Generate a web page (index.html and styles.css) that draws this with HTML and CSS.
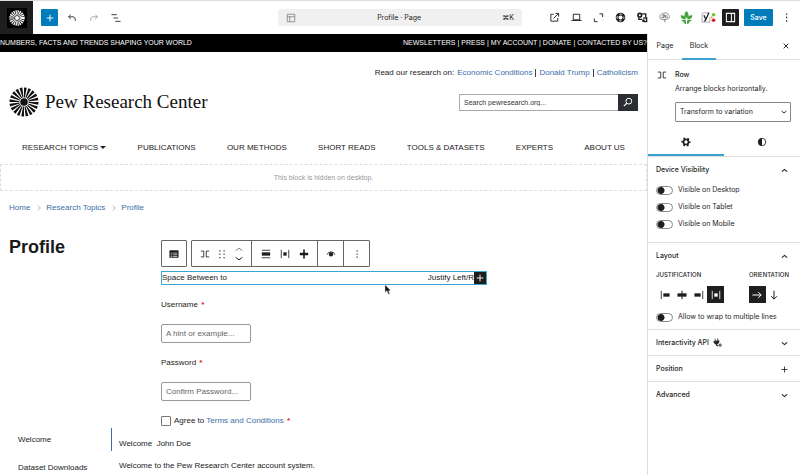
FILE: index.html
```html
<!DOCTYPE html>
<html lang="en">
<head>
<meta charset="utf-8">
<title>Profile · Page</title>
<link rel="stylesheet" href="styles.css">
</head>
<body>
<svg class="defs" aria-hidden="true">
  <symbol id="sun" viewBox="0 0 30 30"><circle cx="15" cy="15" r="9.500" fill="none" stroke="currentColor" stroke-width="10" pathLength="40" stroke-dasharray="1.25 .75"/><circle cx="15" cy="15" r="3.800" fill="currentColor"/></symbol>
  <symbol id="row" viewBox="0 0 24 24"><path d="M2 5h7v14H2M22 5h-7v14h7" fill="none" stroke="currentColor" stroke-width="2"/></symbol>
  <symbol id="plus" viewBox="0 0 24 24"><path d="M12 4v16M4 12h16" fill="none" stroke="currentColor" stroke-width="2.200"/></symbol>
  <symbol id="down" viewBox="0 0 24 24"><path d="M5 9l7 6 7-6" fill="none" stroke="currentColor" stroke-width="2.800"/></symbol>
  <symbol id="up" viewBox="0 0 24 24"><path d="M5 15l7-6 7 6" fill="none" stroke="currentColor" stroke-width="2.800"/></symbol>
  <symbol id="dots" viewBox="0 0 24 24"><path d="M11 3h2.500v3H11zM11 10.500h2.500v3H11zM11 18h2.500v3H11z" fill="currentColor"/></symbol>
  <symbol id="between" viewBox="0 0 24 24"><path d="M3 2v20M21 2v20" stroke="currentColor" stroke-width="2"/><path d="M8 8h8v8H8z" fill="currentColor"/></symbol>
</svg>

<header class="topbar">
  <a class="site-hub" href="#" aria-label="View pages"><svg><use href="#sun"/></svg></a>
  <div class="tools">
    <button class="inserter" aria-label="Add block"><svg><use href="#plus"/></svg></button>
    <button aria-label="Undo"><svg viewBox="0 0 24 24"><path d="M9 4L3.500 9 9 14M4 9h11q5 0 5 8v2" fill="none" stroke="#333" stroke-width="2.200"/></svg></button>
    <button aria-label="Redo"><svg viewBox="0 0 24 24"><path d="M15 4l5.500 5-5.500 5M20 9H9q-5 0-5 8v2" fill="none" stroke="#999" stroke-width="2"/></svg></button>
    <button aria-label="Document overview"><svg viewBox="0 0 24 24"><path d="M1 4h13M6 12h11M10 20h13" stroke="#333" stroke-width="2.200"/></svg></button>
  </div>
  <button class="command">
    <svg viewBox="0 0 24 24"><path d="M3 3h18v18H3zM3 9h18M9 9v12" fill="none" stroke="#777" stroke-width="1.800"/></svg>
    <span>Profile · Page</span>
    <kbd>⌘K</kbd>
  </button>
  <div class="actions">
    <button aria-label="View page"><svg viewBox="0 0 24 24"><path d="M10 5H4v15h15v-7M14 3h7v7M21 3L10 14" fill="none" stroke="currentColor" stroke-width="2"/></svg></button>
    <button aria-label="Preview"><svg viewBox="0 0 24 24"><path d="M5 5h14v12H5zM1 18.500h22" fill="none" stroke="currentColor" stroke-width="2"/></svg></button>
    <button aria-label="Zoom out"><svg viewBox="0 0 24 24"><path d="M14 4h7v7M10 21H3v-7" fill="none" stroke="currentColor" stroke-width="2"/></svg></button>
    <button aria-label="Help"><svg viewBox="0 0 24 24"><circle cx="12" cy="12" r="7.500" fill="none" stroke="currentColor" stroke-width="6"/><circle cx="12" cy="12" r="7.500" fill="none" stroke="#fff" stroke-width="2" pathLength="16" stroke-dasharray="2 2" stroke-dashoffset="1"/></svg></button>
    <button aria-label="Block settings"><svg viewBox="0 0 24 24"><circle cx="6" cy="7" r="4" fill="none" stroke="currentColor" stroke-width="3.500"/><path d="M11 4h8v7M4 12v4h7M14 13h7v8h-6" fill="none" stroke="currentColor" stroke-width="3"/><circle cx="14" cy="19" r="3" fill="currentColor"/></svg></button>
    <button aria-label="Assistant"><svg viewBox="0 0 24 24"><path d="M14 23l-3-8M4 15C-1 11 3 4 8 4c4-4 12-2 13 3 4 4 0 9-5 9-4 1-8 2-12-1zM6 9q6-5 12 0M5 13q7-6 15-1M9 5q5 1 5 9M9 14q0-4 3-5" fill="none" stroke="#777" stroke-width="1.800"/></svg></button>
    <button class="wide" aria-label="Artichoke"><svg viewBox="0 0 24 24"><path d="M12 0q5 4 4 9-1 3-4 4-3-1-4-4-1-5 4-9zM1 8q8-1 10 7-9 2-10-7zM23 8q-8-1-10 7 9 2 10-7zM2 17q7-2 9 1v6H9q-1-4-7-7zM22 17q-7-2-9 1v6h2q1-4 7-7z" fill="#46a33c"/></svg></button>
    <button class="yoast" aria-label="Yoast"><svg viewBox="0 0 32 24"><path d="M15 2H5q-3 0-3 3v17h17V12" fill="none" stroke="#888" stroke-width="1.500"/><path d="M6 7l4 9M17 1l-7 16q-1 3-4 3" fill="none" stroke="#222" stroke-width="2.800"/><circle cx="27" cy="6" r="4" fill="#6cc832"/><circle cx="23" cy="12" r="2" fill="#ee9b36"/><circle cx="27" cy="18" r="4" fill="#dc2020"/></svg></button>
    <button class="settings" aria-label="Settings"><svg viewBox="0 0 24 24"><path d="M3 3h18v18H3zM14 3v18" fill="none" stroke="currentColor" stroke-width="2.200"/></svg></button>
    <button class="save">Save</button>
    <button aria-label="Options"><svg><use href="#dots"/></svg></button>
  </div>
</header>

<div class="editor">
  <main class="canvas">
    <div class="tagline">
      <span>NUMBERS, FACTS AND TRENDS SHAPING YOUR WORLD</span>
      <nav><a href="#">NEWSLETTERS</a> | <a href="#">PRESS</a> | <a href="#">MY ACCOUNT</a> | <a href="#">DONATE</a> | <a href="#">CONTACTED BY US?</a></nav>
    </div>
    <div class="research"><span>Read our research on:</span><a href="#">Economic Conditions</a><i></i><a href="#">Donald Trump</a><i></i><a href="#">Catholicism</a></div>
    <div class="brand">
      <a class="logo" href="#"><svg><use href="#sun"/></svg><span>Pew Research Center</span></a>
      <form class="search">
        <input type="search" aria-label="Search" placeholder="Search pewresearch.org...">
        <button type="button" aria-label="Search"><svg viewBox="0 0 24 24"><circle cx="14" cy="10" r="7" fill="none" stroke="currentColor" stroke-width="2.400"/><path d="M9 15l-7 7" stroke="currentColor" stroke-width="2.600"/></svg></button>
      </form>
    </div>
    <nav class="menu">
      <a href="#">RESEARCH TOPICS <b></b></a><a href="#">PUBLICATIONS</a><a href="#">OUR METHODS</a><a href="#">SHORT READS</a><a href="#">TOOLS &amp; DATASETS</a><a href="#">EXPERTS</a><a href="#">ABOUT US</a>
    </nav>
    <div class="hidden-block">This block is hidden on desktop.</div>
    <nav class="crumbs"><a href="#">Home</a><i></i><a href="#">Research Topics</a><i></i><a href="#">Profile</a></nav>

    <div class="profile">
      <h1>Profile</h1>
      <div class="form">
        <div class="block-toolbar">
          <div class="group parent"><button aria-label="Select parent"><svg viewBox="0 0 24 24"><rect x="1" y="3" width="22" height="18" rx="2" fill="currentColor"/><path d="M4 10h4M10 10h10M4 14h4M10 14h10M4 18h4M10 18h10" stroke="#fff" stroke-width="1.600"/></svg></button></div>
          <div class="group">
            <div class="set"><button aria-label="Row"><svg><use href="#row"/></svg></button><button aria-label="Drag"><svg viewBox="0 0 24 24"><path d="M7 3v20M17 3v20" stroke="currentColor" stroke-width="2.500" stroke-dasharray="3 5"/></svg></button><button aria-label="Move"><svg class="movers" viewBox="0 0 12 18"><path d="M2 5l4-3 4 3" fill="none" stroke="#888" stroke-width="1.200"/><path d="M2 13l4 3 4-3" fill="none" stroke="currentColor" stroke-width="1.200"/></svg></button></div>
            <div class="set"><button aria-label="Align"><svg viewBox="0 0 24 24"><path d="M2 3h20M2 21h20" stroke="currentColor" stroke-width="2"/><path d="M2 8h20v8H2z" fill="currentColor"/></svg></button><button aria-label="Justify"><svg><use href="#between"/></svg></button><button aria-label="Vertical align"><svg viewBox="0 0 24 24"><path d="M10 1h4v22h-4zM2 9h20v6H2z" fill="currentColor"/></svg></button></div>
            <div class="set"><button aria-label="Visibility"><svg viewBox="0 0 24 24"><path d="M2 13q10-12 20 0" fill="none" stroke="currentColor" stroke-width="2.400"/><circle cx="12" cy="13" r="5" fill="currentColor"/></svg></button></div>
            <div class="set"><button aria-label="More"><svg><use href="#dots"/></svg></button></div>
          </div>
        </div>
        <div class="row-block"><span>Space Between to</span><span class="right">Justify Left/R</span><button aria-label="Add block"><svg><use href="#plus"/></svg></button>
          <svg class="cursor" viewBox="0 0 12 18"><path d="M1 1v13l3-3 3 6 2-1-2-5h4z" fill="#111" stroke="#fff" stroke-width=".8"/></svg>
        </div>
        <label for="user">Username <em>*</em></label>
        <input id="user" type="text" placeholder="A hint or example...">
        <label for="pass">Password <em>*</em></label>
        <input id="pass" type="text" placeholder="Confirm Password...">
        <div class="agree"><input id="agree" type="checkbox"><label for="agree">Agree to <a href="#">Terms and Conditions</a> <em>*</em></label></div>
      </div>
    </div>

    <div class="account">
      <nav><a class="current" href="#">Welcome</a><a href="#">Dataset Downloads</a></nav>
      <div><p>Welcome&nbsp; John Doe</p><p>Welcome to the Pew Research Center account system.</p></div>
    </div>
  </main>

  <aside class="sidebar">
    <div class="tabs"><button>Page</button><button class="active">Block</button><button class="close" aria-label="Close"><svg viewBox="0 0 24 24"><path d="M5 5l14 14M19 5L5 19" stroke="currentColor" stroke-width="2.800"/></svg></button></div>
    <div class="card">
      <svg><use href="#row"/></svg>
      <div><h2>Row</h2><p>Arrange blocks horizontally.</p>
        <div class="select"><select aria-label="Transform to variation"><option>Transform to variation</option></select><svg><use href="#down"/></svg></div>
      </div>
    </div>
    <div class="icon-tabs">
      <button class="active" aria-label="Settings"><svg viewBox="0 0 24 24"><circle cx="12" cy="12" r="6" fill="none" stroke="currentColor" stroke-width="4"/><circle cx="12" cy="12" r="9" fill="none" stroke="currentColor" stroke-width="4" pathLength="12" stroke-dasharray="1 1" stroke-dashoffset=".5"/></svg></button>
      <button aria-label="Styles"><svg viewBox="0 0 24 24"><circle cx="12" cy="12" r="9" fill="none" stroke="currentColor" stroke-width="2"/><path d="M12 3a9 9 0 0 1 0 18z" fill="currentColor" transform="rotate(180 12 12)"/></svg></button>
    </div>
    <section class="panel visibility">
      <h3>Device Visibility <svg><use href="#up"/></svg></h3>
      <label class="toggle"><input type="checkbox">Visible on Desktop</label>
      <label class="toggle"><input type="checkbox">Visible on Tablet</label>
      <label class="toggle"><input type="checkbox">Visible on Mobile</label>
    </section>
    <section class="panel layout">
      <h3>Layout <svg><use href="#up"/></svg></h3>
      <div class="controls">
        <div><h4>JUSTIFICATION</h4><div class="buttons">
          <button aria-label="Left"><svg viewBox="0 0 24 24"><path d="M3 2v20" stroke="currentColor" stroke-width="2"/><path d="M8 8h15v8H8z" fill="currentColor"/></svg></button>
          <button aria-label="Center"><svg viewBox="0 0 24 24"><path d="M12 2v20" stroke="currentColor" stroke-width="2.500"/><path d="M1 8h22v8H1z" fill="currentColor"/></svg></button>
          <button aria-label="Right"><svg viewBox="0 0 24 24"><path d="M21 2v20" stroke="currentColor" stroke-width="2"/><path d="M1 8h15v8H1z" fill="currentColor"/></svg></button>
          <button class="on" aria-label="Space between"><svg><use href="#between"/></svg></button>
        </div></div>
        <div><h4>ORIENTATION</h4><div class="buttons">
          <button class="on" aria-label="Horizontal"><svg viewBox="0 0 24 24"><path d="M1 12h21M15 5l7 7-7 7" fill="none" stroke="currentColor" stroke-width="2.400"/></svg></button>
          <button aria-label="Vertical"><svg viewBox="0 0 24 24"><path d="M12 2v20M5 15l7 7 7-7" fill="none" stroke="currentColor" stroke-width="2.400"/></svg></button>
        </div></div>
      </div>
      <label class="toggle"><input type="checkbox">Allow to wrap to multiple lines</label>
    </section>
    <section class="panel"><h3><span>Interactivity API <svg class="plug" viewBox="0 0 24 24"><path d="M5 2l2 6M12 1l1 6M2 9l14-2-1 6-5 4-6-3zM8 15l2 6h4" fill="currentColor" stroke="currentColor" stroke-width="2"/><circle cx="19" cy="19" r="3" fill="none" stroke="currentColor" stroke-width="2.500"/></svg></span><svg><use href="#down"/></svg></h3></section>
    <section class="panel"><h3>Position <svg><use href="#plus"/></svg></h3></section>
    <section class="panel last"><h3>Advanced <svg><use href="#down"/></svg></h3></section>
  </aside>
</div>
</body>
</html>
```
FILE: styles.css
```css
* { box-sizing: border-box; }
body { margin: 0; min-height: 100vh; display: flex; flex-direction: column; background: #fff; color: #222; font: 8px/12px "Liberation Sans", Arial, sans-serif; }
h1, h2, h3, h4, p { margin: 0; }
a { color: #3b6ea8; text-decoration: none; }
em { color: #e02020; font-style: normal; font-weight: bold; margin-left: 1px; }
button { display: flex; align-items: center; justify-content: center; margin: 0; padding: 0; border: 0; background: none; color: inherit; font: inherit; }
svg { width: 10px; height: 10px; flex: none; display: block; }
.defs { position: absolute; width: 0; height: 0; }

.topbar { display: flex; align-items: center; height: 34px; border-top: 1px solid #ddd; font-family: Inter, sans-serif; color: #1e1e1e; }
.site-hub { display: flex; align-items: center; justify-content: center; width: 33px; align-self: stretch; background: #1e1e1e; color: #fff; }
.site-hub svg { width: 20px; height: 20px; padding: 2px; background: #000; }
.tools { display: flex; align-items: center; gap: 5px; margin-left: 8px; }
.tools button { width: 17px; height: 17px; }
.tools .inserter { background: #007cba; color: #fff; border-radius: 1px; }
.command { flex: 1; max-width: 244px; height: 17px; margin-left: 154px; padding: 0 8px; background: #f0f0f0; border-radius: 3px; justify-content: space-between; font-size: 7px; }
.command kbd { font: inherit; }
.actions { display: flex; align-items: center; gap: 5px; margin-left: auto; padding-right: 5px; }
.actions button { width: 17px; height: 17px; }
.actions svg { width: 11px; height: 11px; }
.actions .wide svg { width: 13px; height: 13px; }
.actions .yoast svg { width: 15px; }
.actions .settings { background: #1e1e1e; color: #fff; border-radius: 1px; }
.actions .save { width: 29px; background: #007cba; color: #fff; font-size: 7px; font-weight: 500; border-radius: 1px; }

.editor { flex: 1; display: flex; height: calc(100vh - 34px); overflow: hidden; }
.canvas { flex: 1; min-width: 0; overflow: hidden; }
.tagline { display: flex; justify-content: space-between; height: 18px; align-items: center; background: #000; color: #fff; font-size: 7px; white-space: nowrap; }
.tagline a { color: #fff; }
.research { display: flex; align-items: center; justify-content: flex-end; gap: 3px; padding: 15px 9px 0; }
.research i { width: 1px; height: 8px; background: #444; }
.brand { display: flex; align-items: center; justify-content: space-between; padding: 8px 9px 0; }
.logo { display: flex; align-items: center; gap: 6px; color: #111; font: 19px/30px "Liberation Serif", serif; }
.logo svg { width: 30px; height: 30px; }
.search { display: flex; width: 179px; height: 17px; }
.search input { flex: 1; min-width: 0; padding: 0 4px; border: 1px solid #aaa; border-right: 0; border-radius: 0; font: 7px "Liberation Sans", sans-serif; color: #222; }
.search input::placeholder { color: #333; }
.search button { width: 20px; background: #2a2d31; color: #fff; }
.menu { display: flex; justify-content: space-between; padding: 25px 22px 10px; }
.menu a { color: #222; }
.menu b { display: inline-block; border: 3px solid transparent; border-top-color: #222; border-bottom: 0; vertical-align: 1px; }
.hidden-block { display: flex; align-items: center; justify-content: center; height: 27px; border: 1px dashed #ddd; color: #999; font-size: 7px; }
.crumbs { display: flex; align-items: center; gap: 6px; padding: 11px 9px 0; }
.crumbs i { width: 4px; height: 4px; border: 1px solid #ccc; border-left: 0; border-bottom: 0; transform: rotate(45deg); }
.profile { display: grid; grid-template-columns: 152px 326px; padding: 26px 9px 0; }
h1 { font-size: 18px; line-height: 14px; color: #1a1a1a; }
.form { display: flex; flex-direction: column; align-items: flex-start; }
.block-toolbar { display: flex; gap: 4px; color: #1e1e1e; }
.group { display: flex; height: 27px; border: 1px solid #666; border-radius: 1px; background: #fff; }
.set { display: flex; padding: 0 4px; }
.set + .set { border-left: 1px solid #666; }
.group button { width: 17px; }
.set:nth-child(2) button { width: 19px; }
.group.parent button { width: 24px; }
.group .movers { height: 16px; }
.row-block { position: relative; display: flex; align-items: center; width: 100%; height: 14px; margin-top: 4px; border: 1px solid #3aa3cf; }
.row-block .right { margin-left: auto; }
.row-block button { width: 12px; height: 12px; background: #1e1e1e; color: #fff; }
.cursor { position: absolute; left: 222px; top: 12px; width: 8px; height: 11px; }
.form > label { margin-top: 14px; }
.form > input { width: 90px; height: 19px; margin-top: 13px; padding: 0 4px; border: 1px solid #999; border-radius: 2px; font: inherit; }
.form > input::placeholder { color: #666; }
.agree { display: flex; align-items: center; gap: 3px; margin-top: 14px; }
.agree input { appearance: none; width: 10px; height: 10px; margin: 0; border: 1px solid #777; border-radius: 1px; }
.account { display: flex; gap: 7px; padding: 1px 18px 0; }
.account nav { display: flex; flex-direction: column; width: 94px; }
.account nav a { color: #222; padding: 6px 0 5px; margin-bottom: 5px; }
.account nav .current { border-right: 1px solid #3b6ea8; }
.account p { padding-top: 10px; white-space: nowrap; }

.sidebar { width: 153px; border-left: 1px solid #ddd; font: 7px/10px Inter, sans-serif; color: #1e1e1e; }
.tabs { display: flex; height: 26px; border-bottom: 1px solid #ddd; }
.tabs button { width: 34px; height: 26px; border-bottom: 2px solid transparent; }
.tabs .active { border-bottom-color: #3aa3cf; }
.tabs .close { width: 20px; margin-left: auto; margin-right: 4px; }
.tabs svg { width: 8px; height: 8px; }
.card { display: flex; gap: 8px; padding: 10px 9px 0; }
.card > div { flex: 1; }
h2, h3 { font-size: 7px; line-height: 10px; font-weight: 500; }
.card p { margin-top: 4px; }
.select { position: relative; margin-top: 8px; }
.select select { appearance: none; width: 100%; height: 20px; padding: 0 4px; border: 1px solid #888; border-radius: 1px; background: #fff; color: inherit; font: inherit; }
.select svg { position: absolute; right: 3px; top: 6px; width: 8px; height: 8px; }
.icon-tabs { display: flex; margin-top: 8px; border-bottom: 1px solid #ddd; }
.icon-tabs button { flex: 1; height: 26px; border-bottom: 2px solid transparent; }
.icon-tabs .active { border-bottom-color: #3aa3cf; }
.panel { padding: 8px 11px 7px 8px; border-bottom: 1px solid #ddd; }
.panel h3 { display: flex; justify-content: space-between; align-items: center; }
.panel h3 span { display: flex; gap: 4px; }
.panel svg { width: 9px; height: 9px; }
.toggle { display: flex; align-items: center; gap: 5px; margin-top: 7px; }
.toggle input { appearance: none; width: 17px; height: 9px; margin: 0; border: 1px solid #888; border-radius: 5px; background: radial-gradient(circle at 4px 50%, #1e1e1e 3px, transparent 4px); }
.visibility { padding-bottom: 13px; }
.visibility h3 { margin-bottom: 10px; }
.controls { display: flex; justify-content: space-between; margin-top: 9px; }
h4 { font-size: 6px; line-height: 10px; font-weight: 500; }
.buttons { display: flex; margin-top: 6px; }
.buttons button { width: 17px; height: 17px; }
.buttons svg { width: 10px; height: 10px; }
.buttons .on { background: #1e1e1e; color: #fff; }
.layout .toggle { margin-top: 9px; }
.last { border-bottom: 0; }
```
